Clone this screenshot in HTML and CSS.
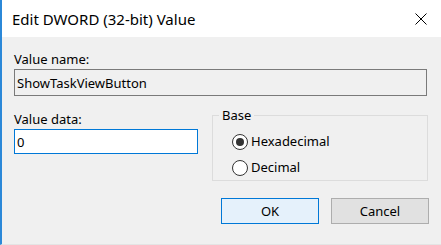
FILE: index.html
```html
<!DOCTYPE html>
<html lang="en">

<head>
    <meta charset="UTF-8">
    <meta name="viewport" content="width=device-width, initial-scale=1.0">
    <title>Edit DWORD (32-bit) Value</title>
    <link rel="stylesheet" href="styles.css">
</head>

<body>
    <div class="window">
        <div class="titlebar">
            <span class="title">Edit DWORD (32-bit) Value</span>
            <button class="close" aria-label="Close">
                <svg width="12" height="12" viewBox="0 0 12 12">
                    <path d="M0.5 0.5 L11.5 11.5 M11.5 0.5 L0.5 11.5" stroke="#000" stroke-width="1" fill="none" />
                </svg>
            </button>
        </div>
        <div class="content">
            <label class="label" for="name">Value name:</label>
            <input class="field field-name" id="name" type="text" value="ShowTaskViewButton" readonly>
            <div class="row">
                <div class="data-col">
                    <label class="label" for="data">Value data:</label>
                    <input class="field field-data" id="data" type="text" value="0">
                </div>
                <fieldset class="base">
                    <legend>Base</legend>
                    <div class="radios">
                        <label class="radio"><input type="radio" name="base" checked><span>Hexadecimal</span></label>
                        <label class="radio"><input type="radio" name="base"><span>Decimal</span></label>
                    </div>
                </fieldset>
            </div>
            <div class="buttons">
                <button class="btn btn-ok">OK</button>
                <button class="btn">Cancel</button>
            </div>
        </div>
    </div>
</body>

</html>
```

FILE: styles.css
```css
body {
    margin: 0;
    font-family: "Noto Sans", "Open Sans", sans-serif;
    font-size: 13px;
    color: #000;
}

.window {
    width: 441px;
    height: 245px;
    box-sizing: border-box;
    border-left: 2px solid #2b88d8;
    border-bottom: 1px solid #e4e4e4;
    background: #f0f0f0;
    display: flex;
    flex-direction: column;
}

.titlebar {
    height: 37px;
    background: #fff;
    display: flex;
    align-items: center;
    justify-content: space-between;
    padding: 0 14px 0 10px;
}

.title {
    font-size: 15px;
    padding-top: 1px;
}

.close {
    border: none;
    background: none;
    padding: 0;
    width: 12px;
    height: 12px;
    display: flex;
}

.content {
    padding: 0 12px 0 12px;
    display: flex;
    flex-direction: column;
}

.label {
    display: block;
    line-height: 18px;
}

.content > .label {
    margin-top: 13px;
    margin-bottom: 1px;
}

.field {
    font: inherit;
    box-sizing: border-box;
    padding: 0 2px;
    margin: 0;
    outline: none;
}

.field-name {
    width: 413px;
    height: 27px;
    border: 1px solid #7a7a7a;
    background: #f0f0f0;
}

.row {
    display: flex;
    gap: 14px;
}

.data-col {
    width: 184px;
    padding-top: 14px;
}

.data-col .label {
    margin-bottom: 1px;
}

.field-data {
    width: 184px;
    height: 25px;
    border: 1px solid #0078d7;
    background: #fff;
}

.base {
    width: 216px;
    height: 75px;
    box-sizing: border-box;
    margin: 10px 0 0 0;
    padding: 0 0 0 6px;
    border: 1px solid #dcdcdc;
}

.base legend {
    padding: 0 3px;
    line-height: 18px;
}

.radios {
    display: flex;
    flex-direction: column;
    gap: 7px;
    padding: 8px 0 0 13px;
}

.radio {
    display: flex;
    align-items: center;
    gap: 3px;
    line-height: 19px;
}

.radio input {
    appearance: none;
    margin: 0;
    width: 16px;
    height: 16px;
    border: 1px solid #333;
    border-radius: 50%;
    background: #fff;
    display: grid;
    place-content: center;
}

.radio input:checked::before {
    content: "";
    width: 8px;
    height: 8px;
    border-radius: 50%;
    background: #333;
}

.buttons {
    display: flex;
    justify-content: flex-end;
    gap: 12px;
    margin-top: 17px;
}

.btn {
    font: inherit;
    width: 98px;
    height: 26px;
    border: 1px solid #adadad;
    background: #e1e1e1;
    padding: 0;
    color: #000;
}

.btn-ok {
    border-color: #0078d7;
    background: #e5f1fb;
}
```
